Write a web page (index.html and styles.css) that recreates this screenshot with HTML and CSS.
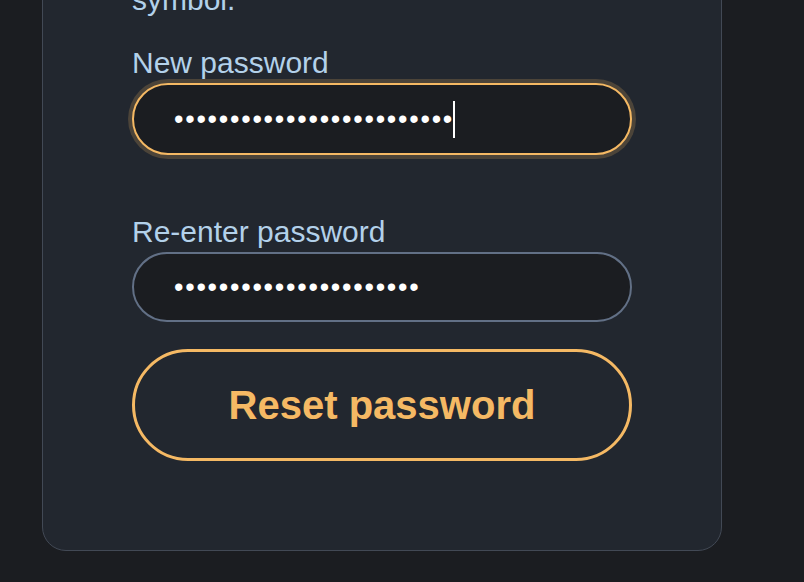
FILE: index.html
```html
<!DOCTYPE html>
<html lang="en">
<head>
<meta charset="utf-8">
<title>Reset password</title>
<link rel="stylesheet" href="styles.css">
</head>
<body>
<main class="page">
  <section class="card">
    <p class="hint">Use at least 12 characters,<br>including a number and a<br>symbol.</p>
    <div class="field field-first">
      <label class="label">New password</label>
      <div class="input input-focus"><span class="dots">•••••••••••••••••••••••••</span><span class="caret"></span></div>
    </div>
    <div class="field field-second">
      <label class="label">Re-enter password</label>
      <div class="input input-idle"><span class="dots">••••••••••••••••••••••</span></div>
    </div>
    <button class="submit" type="button">Reset password</button>
  </section>
</main>
</body>
</html>
```
FILE: styles.css
```css
html, body {
  margin: 0;
  padding: 0;
  background: #1b1d21;
  height: 100%;
  overflow: hidden;
}

.page {
  padding-left: 42px;
  font-family: "Liberation Sans", Arial, sans-serif;
}

.card {
  box-sizing: border-box;
  width: 680px;
  margin-top: -126px;
  padding: 40px 89px 89px;
  background: #22272f;
  border: 1px solid #424955;
  border-radius: 24px;
  display: flex;
  flex-direction: column;
}

.hint {
  margin: 0 0 29px;
  font-size: 30px;
  line-height: 34px;
  color: #b3d1ea;
  white-space: nowrap;
}

.field {
  display: flex;
  flex-direction: column;
}

.field-first {
  margin-bottom: 60px;
}

.field-second {
  margin-bottom: 27px;
}

.label {
  font-size: 30px;
  line-height: 34px;
  color: #b3d1ea;
  margin-bottom: 3px;
}

.input {
  box-sizing: border-box;
  width: 500px;
  display: flex;
  align-items: center;
  background: #1b1d21;
  border-radius: 999px;
  font-family: "Liberation Sans", Arial, sans-serif;
  font-size: 27px;
  color: #ffffff;
}

.input-focus {
  height: 72px;
  padding-left: 40px;
  border: 2px solid #f5b964;
  box-shadow: 0 0 0 4px rgba(245, 185, 100, 0.2);
}

.input-idle {
  height: 70px;
  padding-left: 40px;
  border: 2px solid #627086;
}

.dots {
  line-height: 30px;
  letter-spacing: 1.75px;
  white-space: nowrap;
}

.caret {
  width: 2px;
  height: 37px;
  background: #ffffff;
  margin-left: -1px;
}

.submit {
  box-sizing: border-box;
  width: 500px;
  height: 112px;
  background: transparent;
  border: 3px solid #f5b964;
  border-radius: 999px;
  color: #f5b964;
  font-family: "Liberation Sans", Arial, sans-serif;
  font-size: 40px;
  font-weight: bold;
  padding: 0;
  cursor: pointer;
}
```
